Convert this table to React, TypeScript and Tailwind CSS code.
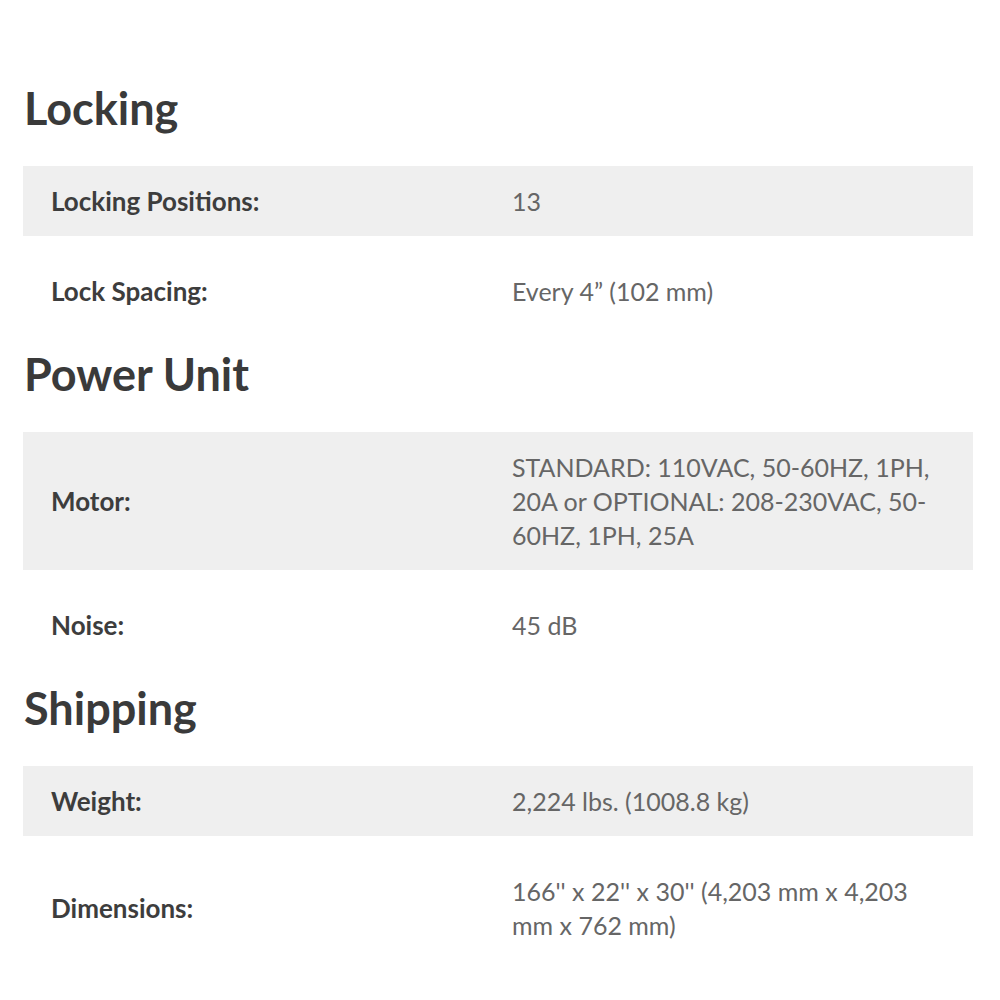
const specs = [
  {
    title: "Locking",
    rows: [
      { label: "Locking Positions:", value: "13" },
      { label: "Lock Spacing:", value: "Every 4\u201d (102 mm)" },
    ],
  },
  {
    title: "Power Unit",
    rows: [
      {
        label: "Motor:",
        value: "STANDARD: 110VAC, 50-60HZ, 1PH, 20A or OPTIONAL: 208-230VAC, 50-60HZ, 1PH, 25A",
      },
      { label: "Noise:", value: "45 dB" },
    ],
  },
  {
    title: "Shipping",
    rows: [
      { label: "Weight:", value: "2,224 lbs. (1008.8 kg)" },
      { label: "Dimensions:", value: "166'' x 22'' x 30'' (4,203 mm x 4,203 mm x 762 mm)" },
    ],
  },
]

const App = () => {
  return (
    <div className="min-h-screen bg-white px-[23px] pt-[83px] font-['Lato',sans-serif]">
      <div className="flex w-[950px] flex-col gap-[23px]">
        {specs.map((section) => (
          <section key={section.title}>
            {/* Section title */}
            <h2 className="mb-[33px] pl-px text-[45px] font-bold leading-[50px] text-[#3a3a3a]">
              {section.title}
            </h2>

            {/* Spec rows */}
            <div className="flex flex-col gap-[20px]">
              {section.rows.map((row, i) => (
                <div
                  key={row.label}
                  className={`flex items-center py-[18px] ${i % 2 === 0 ? "bg-[#efefef]" : "bg-white"}`}
                >
                  <div className="w-[489px] pl-[28px] text-[26px] font-bold leading-[34px] text-[#3d3d3d]">
                    {row.label}
                  </div>
                  <div className="w-[430px] text-[25px] leading-[34px] text-[#666666]">{row.value}</div>
                </div>
              ))}
            </div>
          </section>
        ))}
      </div>
    </div>
  )
}

export default App
